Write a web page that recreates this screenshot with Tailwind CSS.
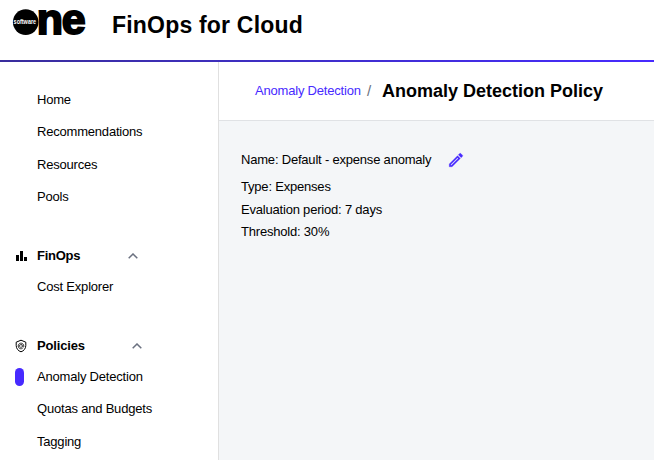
<!DOCTYPE html>
<html lang="en">
<head>
<meta charset="utf-8">
<title>FinOps for Cloud</title>
<script src="https://cdn.jsdelivr.net/npm/@tailwindcss/browser@4"></script>
</head>
<body class="flex h-[460px] w-[654px] flex-col overflow-hidden bg-white font-['Liberation_Sans',Arial,sans-serif] text-[13px] leading-5 tracking-[-0.2px] text-black">
<header class="flex h-[60px] shrink-0 items-start">
  <svg class="ml-3 mt-2 h-7 w-[74px] shrink-0 overflow-visible" viewBox="12 8 74 28" role="img" aria-label="SoftwareOne">
    <circle cx="25.7" cy="22.1" r="12.8"/>
    <text x="36.7" y="33.800" stroke="black" stroke-width="2" class="text-[43px] font-bold tracking-[-1.2px]">ne</text>
    <text x="13.600" y="24" textLength="22.500" lengthAdjust="spacingAndGlyphs" fill="white" class="text-[6.5px] font-bold tracking-normal">software</text>
  </svg>
  <h1 class="ml-[26px] mt-[9px] text-[23px] font-bold leading-8 tracking-[0.2px] whitespace-nowrap">FinOps for Cloud</h1>
</header>
<div class="h-0.5 shrink-0 bg-linear-to-r from-[#392d9c] to-[#472aff]"></div>
<div class="flex min-h-0 flex-1">
  <nav class="w-[219px] shrink-0 border-r border-[#e0e0e0] pt-[28px]">
    <ul class="pl-[37px]">
      <li class="h-8">Home</li>
      <li class="h-[33px]">Recommendations</li>
      <li class="h-8">Resources</li>
      <li>Pools</li>
    </ul>
    <div class="mt-[39px] flex h-5 items-center">
      <svg class="ml-[15px] h-3 w-3" viewBox="0 0 12 12"><path d="M1 5h3v6H1zM5 1h3v10H5zM9 7h3v4H9z"/></svg>
      <span class="ml-[10px] w-[91px] font-bold tracking-[-0.25px]">FinOps</span>
      <svg class="h-[6px] w-[10px]" viewBox="0 0 10 6" fill="none" stroke="#6b7180" stroke-width="1.5"><path d="M.7 5.3 5 1l4.3 4.3"/></svg>
    </div>
    <ul class="mt-[11px] pl-[37px]"><li>Cost Explorer</li></ul>
    <div class="mt-[39px] flex h-5 items-center">
      <svg class="ml-[14px] h-[14px] w-[14px]" viewBox="0 0 14 14" fill="none" stroke="black"><path d="M7 1.200 2.200 3.200v3.300c0 3 2 5.500 4.800 6.300 2.800-.8 4.800-3.300 4.800-6.300V3.200z" stroke-width="1"/><path d="M8.700 9.200a2.800 2.800 0 1 1 1.100-2.200v.4c0 1-1.400 1-1.400 0V7a1.400 1.400 0 1 0-.5 1" stroke-width=".8"/></svg>
      <span class="ml-[9px] w-[95px] font-bold tracking-[-0.15px]">Policies</span>
      <svg class="h-[6px] w-[10px]" viewBox="0 0 10 6" fill="none" stroke="#6b7180" stroke-width="1.5"><path d="M.7 5.300 5 1l4.300 4.300"/></svg>
    </div>
    <ul class="mt-[11px]">
      <li class="flex h-8 items-start"><span class="ml-[15px] mt-px h-[18px] w-[9px] rounded-full bg-[#472aff]"></span><span class="ml-[13px]">Anomaly Detection</span></li>
      <li class="h-[33px] pl-[37px]">Quotas and Budgets</li>
      <li class="pl-[37px]">Tagging</li>
    </ul>
  </nav>
  <main class="flex min-w-0 flex-1 flex-col bg-[#f4f6f8]">
    <div class="flex h-[59px] shrink-0 items-center border-b border-[#e0e2e5] bg-white pl-9 whitespace-nowrap">
      <a class="w-[106px] text-[#472aff]">Anomaly Detection</a>
      <span class="ml-[6px] w-1 text-[15px] text-[#6b7180]">/</span>
      <h2 class="ml-[11px] text-[18px] font-bold leading-6 tracking-normal">Anomaly Detection Policy</h2>
    </div>
    <div class="flex flex-col pl-[22px] pt-[29px]">
      <div class="flex h-[27px] items-start"><span class="w-[191px] whitespace-nowrap">Name: Default - expense anomaly</span>
        <svg class="ml-[15px] mt-px h-[18px] w-[18px]" viewBox="0 0 24 24" fill="#472aff" stroke="#472aff" stroke-width=".4"><path d="m14.060 9.020.92.920L5.920 19H5v-.92l9.060-9.060M17.660 3c-.25 0-.51.100-.7.290l-1.830 1.830 3.750 3.750 1.830-1.830c.39-.39.39-1.020 0-1.410l-2.340-2.340c-.2-.2-.45-.29-.71-.29zm-3.600 3.190L3 17.250V21h3.750L17.810 9.940l-3.750-3.750z"/></svg>
      </div>
      <div class="h-[23px]">Type: Expenses</div>
      <div class="h-[22px]">Evaluation period: 7 days</div>
      <div>Threshold: 30%</div>
    </div>
  </main>
</div>
</body>
</html>
